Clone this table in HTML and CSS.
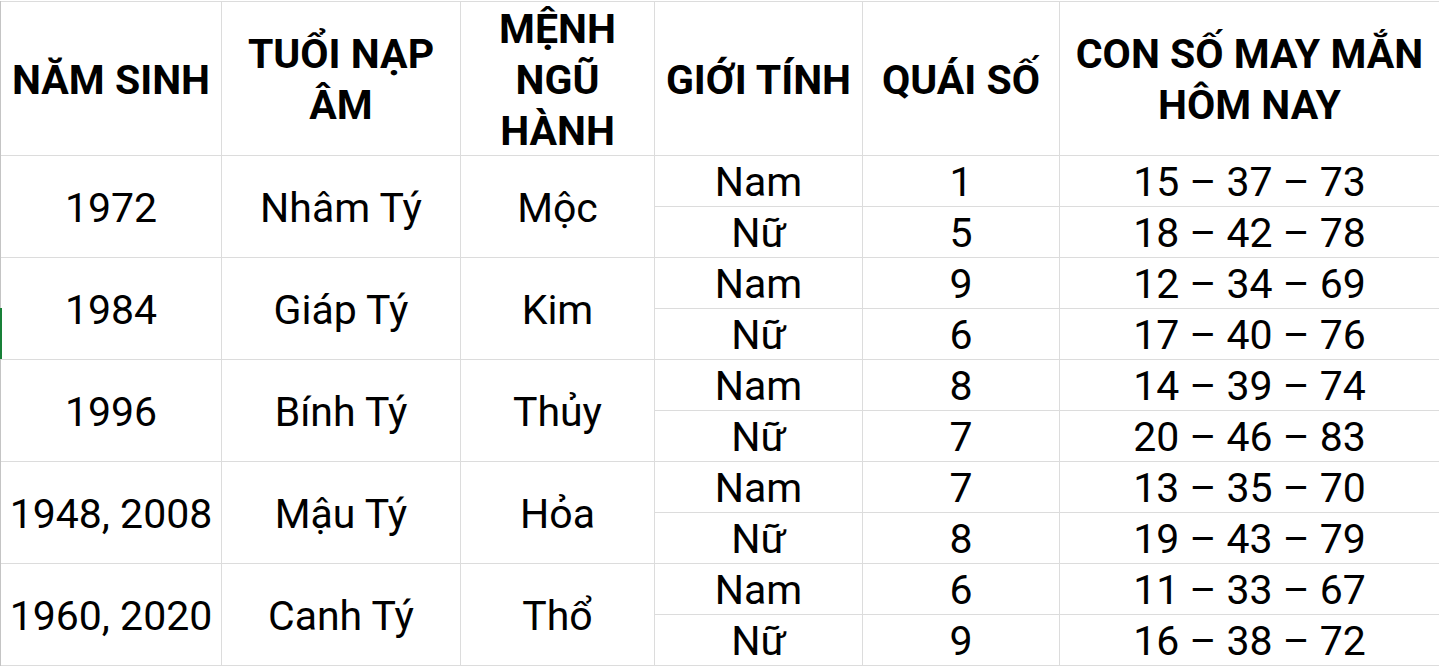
FILE: index.html
```html
<!DOCTYPE html>
<html lang="vi">
<head>
<meta charset="utf-8">
<title>Con số may mắn tuổi Tý</title>
<link rel="stylesheet" href="styles.css">
</head>
<body>
<div class="sheet">
  <div class="grid">
    <div class="cell head">NĂM SINH</div>
    <div class="cell head">TUỔI NẠP<br>ÂM</div>
    <div class="cell head">MỆNH<br>NGŨ<br>HÀNH</div>
    <div class="cell head">GIỚI TÍNH</div>
    <div class="cell head">QUÁI SỐ</div>
    <div class="cell head">CON SỐ MAY MẮN<br>HÔM NAY</div>

    <div class="cell span">1972</div>
    <div class="cell span">Nhâm Tý</div>
    <div class="cell span">Mộc</div>
    <div class="cell">Nam</div>
    <div class="cell">1</div>
    <div class="cell">15 – 37 – 73</div>
    <div class="cell">Nữ</div>
    <div class="cell">5</div>
    <div class="cell">18 – 42 – 78</div>

    <div class="cell span">1984</div>
    <div class="cell span">Giáp Tý</div>
    <div class="cell span">Kim</div>
    <div class="cell">Nam</div>
    <div class="cell">9</div>
    <div class="cell">12 – 34 – 69</div>
    <div class="cell">Nữ</div>
    <div class="cell">6</div>
    <div class="cell">17 – 40 – 76</div>

    <div class="cell span">1996</div>
    <div class="cell span">Bính Tý</div>
    <div class="cell span">Thủy</div>
    <div class="cell">Nam</div>
    <div class="cell">8</div>
    <div class="cell">14 – 39 – 74</div>
    <div class="cell">Nữ</div>
    <div class="cell">7</div>
    <div class="cell">20 – 46 – 83</div>

    <div class="cell span">1948, 2008</div>
    <div class="cell span">Mậu Tý</div>
    <div class="cell span">Hỏa</div>
    <div class="cell">Nam</div>
    <div class="cell">7</div>
    <div class="cell">13 – 35 – 70</div>
    <div class="cell">Nữ</div>
    <div class="cell">8</div>
    <div class="cell">19 – 43 – 79</div>

    <div class="cell span">1960, 2020</div>
    <div class="cell span">Canh Tý</div>
    <div class="cell span">Thổ</div>
    <div class="cell">Nam</div>
    <div class="cell">6</div>
    <div class="cell">11 – 33 – 67</div>
    <div class="cell">Nữ</div>
    <div class="cell">9</div>
    <div class="cell">16 – 38 – 72</div>
  </div>
  <div class="row-marker"></div>
</div>
</body>
</html>
```
FILE: styles.css
```css
html, body {
  margin: 0;
  padding: 0;
  background: #ffffff;
}
body {
  font-family: Roboto, "Noto Sans", "Liberation Sans", sans-serif;
  color: #000000;
  overflow: hidden;
}
.sheet {
  position: relative;
  width: 1439px;
  height: 666px;
  padding-top: 1px;
  box-sizing: border-box;
}
.grid {
  display: grid;
  grid-template-columns: 220px 238px 193px 207px 196px 1fr;
  grid-template-rows: 153px repeat(10, 50px);
  gap: 1px;
  background: #dcdcdc;
  border-left: 1px solid #c4c4c4;
  padding-top: 1px;
  padding-bottom: 1px;
}
.cell {
  background: #ffffff;
  display: flex;
  align-items: center;
  justify-content: center;
  text-align: center;
  font-size: 41px;
  line-height: 51px;
  white-space: nowrap;
  padding-top: 3px;
  box-sizing: border-box;
  overflow: visible;
}
.head {
  font-weight: 700;
  font-size: 41px;
}
.span {
  grid-row: span 2;
}
.row-marker {
  position: absolute;
  left: 0;
  top: 308px;
  width: 2px;
  height: 51px;
  background: #188038;
}
```
